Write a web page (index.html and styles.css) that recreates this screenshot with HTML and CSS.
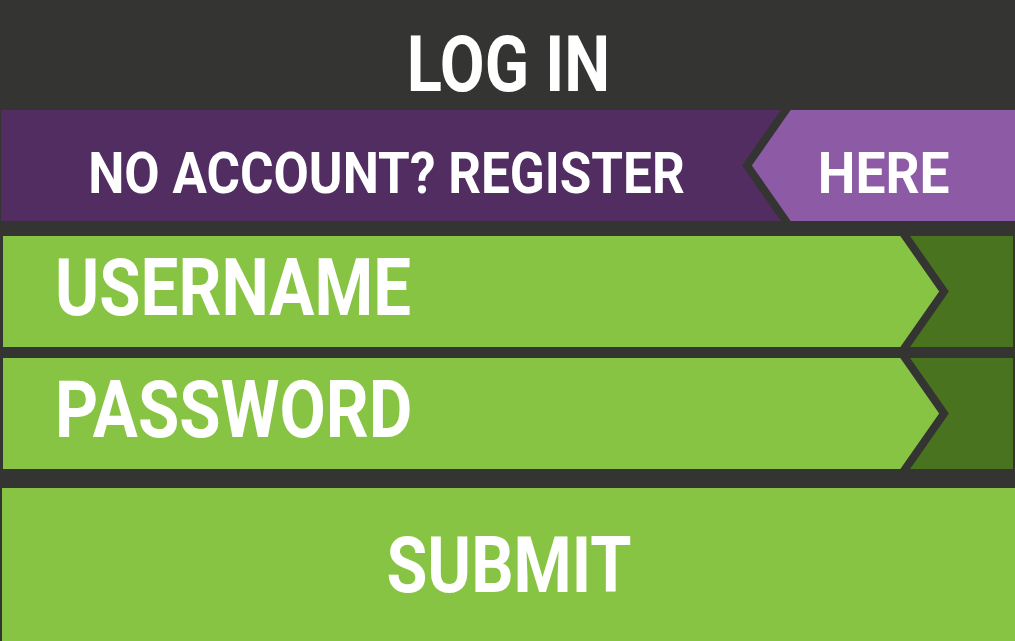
FILE: index.html
```html
<!DOCTYPE html>
<html lang="en">
<head>
<meta charset="utf-8">
<title>Log in</title>
<link rel="stylesheet" href="styles.css">
</head>
<body>
<main class="page">
  <header class="title-bar">
    <h1 class="title"><span class="squeeze squeeze-title">LOG IN</span></h1>
  </header>

  <section class="register-band">
    <div class="register-text"><span class="squeeze squeeze-reg">NO ACCOUNT? REGISTER</span></div>
    <a class="register-here" href="#">
      <svg class="here-bg" width="275" height="111" viewBox="0 0 275 111" aria-hidden="true">
        <polygon points="0,0 46,0 7,55.5 46,111 0,111" fill="#512d62"/>
        <polygon points="46,0 275,0 275,111 46,111 7,55.5" fill="#8d5aa5"/>
        <polyline points="50,-6 7,55.5 50,117" fill="none" stroke="#343433" stroke-width="8"/>
      </svg>
      <span class="here-label"><span class="squeeze squeeze-here">HERE</span></span>
    </a>
  </section>

  <form class="login-form">
    <label class="field-row">
      <span class="field-label"><span class="squeeze squeeze-field">USERNAME</span></span>
      <svg class="field-arrow" width="115" height="111" viewBox="0 0 115 111" aria-hidden="true">
        <polygon points="0,0 7,0 46,55.5 7,111 0,111" fill="#88c443"/>
        <polygon points="7,0 115,0 115,111 7,111 46,55.5" fill="#49731f"/>
        <polyline points="3,-6 46,55.5 3,117" fill="none" stroke="#343433" stroke-width="8"/>
      </svg>
    </label>
    <label class="field-row field-row-second">
      <span class="field-label"><span class="squeeze squeeze-field">PASSWORD</span></span>
      <svg class="field-arrow" width="115" height="111" viewBox="0 0 115 111" aria-hidden="true">
        <polygon points="0,0 7,0 46,55.5 7,111 0,111" fill="#88c443"/>
        <polygon points="7,0 115,0 115,111 7,111 46,55.5" fill="#49731f"/>
        <polyline points="3,-6 46,55.5 3,117" fill="none" stroke="#343433" stroke-width="8"/>
      </svg>
    </label>
    <button class="submit" type="button"><span class="squeeze squeeze-submit">SUBMIT</span></button>
  </form>
</main>
</body>
</html>
```

FILE: styles.css
```css
html, body {
  margin: 0;
  padding: 0;
  background: #343433;
  height: 100%;
  overflow: hidden;
}

.page {
  font-family: Roboto, "Liberation Sans", sans-serif;
  font-weight: 700;
  color: #ffffff;
  display: flex;
  flex-direction: column;
  width: 1015px;
  height: 641px;
}

.squeeze {
  display: inline-block;
  line-height: 1;
  white-space: nowrap;
}

.title-bar {
  height: 110px;
  box-sizing: border-box;
  padding-top: 21px;
  display: flex;
  align-items: center;
  justify-content: center;
}

.title {
  margin: 0;
  font-size: 77px;
  font-weight: 700;
  line-height: 1;
  padding-left: 1px;
}

.squeeze-title {
  transform: scaleX(0.845);
}

.register-band {
  height: 111px;
  display: flex;
  padding-left: 1px;
}

.register-text {
  width: 739px;
  box-sizing: border-box;
  background: #512d62;
  display: flex;
  align-items: center;
  justify-content: center;
  padding-left: 32px;
  padding-top: 14px;
  font-size: 58px;
}

.squeeze-reg {
  transform: scaleX(0.884);
}

.register-here {
  position: relative;
  width: 275px;
  height: 111px;
  display: flex;
  align-items: center;
  justify-content: center;
  box-sizing: border-box;
  padding-left: 12px;
  padding-top: 14px;
  color: #ffffff;
  text-decoration: none;
  font-size: 58px;
}

.here-bg {
  position: absolute;
  left: 0;
  top: 0;
}

.here-label {
  position: relative;
}

.squeeze-here {
  transform: scaleX(0.92);
}

.login-form {
  margin: 15px 0 0 0;
  display: flex;
  flex-direction: column;
  flex: 1;
}

.field-row {
  height: 111px;
  display: flex;
  margin-left: 3px;
  margin-right: 2px;
}

.field-row-second {
  margin-top: 11px;
}

.field-label {
  flex: 1;
  background: #88c443;
  display: flex;
  align-items: center;
  padding-left: 52px;
  padding-bottom: 7px;
  font-size: 79px;
}

.squeeze-field {
  transform: scaleX(0.85);
  transform-origin: left center;
}

.field-arrow {
  display: block;
  flex: none;
}

.submit {
  margin: 19px 0 0 2px;
  flex: 1;
  border: 0;
  background: #88c443;
  color: #ffffff;
  font-family: Roboto, "Liberation Sans", sans-serif;
  font-weight: 700;
  font-size: 77px;
  display: flex;
  align-items: center;
  justify-content: center;
  padding: 4px 0 0 0;
  cursor: pointer;
}

.squeeze-submit {
  transform: scaleX(0.863);
}
```
